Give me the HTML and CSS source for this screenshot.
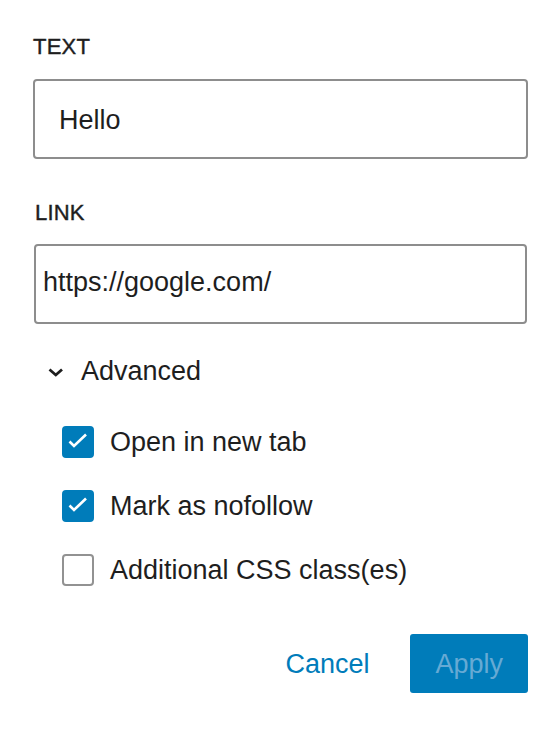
FILE: index.html
```html
<!DOCTYPE html>
<html>
<head>
<meta charset="utf-8">
<link rel="stylesheet" href="styles.css">
</head>
<body>
<div class="panel">
  <div class="field-label label-text">TEXT</div>
  <div class="input input-text">Hello</div>
  <div class="field-label label-link">LINK</div>
  <div class="input input-link">https://google.com/</div>
  <div class="advanced">
    <svg class="chevron" width="16" height="9" viewBox="0 0 16 9"><polyline points="1.5,1.5 7.8,7 14,1.5" fill="none" stroke="#1e1e1e" stroke-width="2.8"/></svg>
    <span>Advanced</span>
  </div>
  <div class="options">
    <div class="option">
      <span class="box checked"><svg width="32" height="32" viewBox="0 0 32 32"><polyline points="7.5,15.5 12,20 24,8.5" fill="none" stroke="#fff" stroke-width="2.6"/></svg></span>
      <span>Open in new tab</span>
    </div>
    <div class="option">
      <span class="box checked"><svg width="32" height="32" viewBox="0 0 32 32"><polyline points="7.5,15.5 12,20 24,8.5" fill="none" stroke="#fff" stroke-width="2.6"/></svg></span>
      <span>Mark as nofollow</span>
    </div>
    <div class="option">
      <span class="box"></span>
      <span>Additional CSS class(es)</span>
    </div>
  </div>
  <div class="actions">
    <button class="btn btn-cancel">Cancel</button>
    <button class="btn btn-apply">Apply</button>
  </div>
</div>
</body>
</html>
```
FILE: styles.css
```css
html, body {
  margin: 0;
  padding: 0;
  background: #ffffff;
}
body {
  font-family: "Liberation Sans", Arial, sans-serif;
  color: #1e1e1e;
}
.panel {
  width: 495px;
  margin-left: 33px;
  padding-top: 33px;
  display: flex;
  flex-direction: column;
}
.field-label {
  font-size: 22px;
  line-height: 28px;
  letter-spacing: 0.2px;
  -webkit-text-stroke: 0.4px #1e1e1e;
}
.label-text {
  margin-bottom: 18px;
}
.label-link {
  margin-top: 40px;
  margin-bottom: 17px;
  margin-left: 2px;
}
.input {
  box-sizing: border-box;
  height: 80px;
  border: 2px solid #8d8d8d;
  border-radius: 4px;
  font-size: 27px;
  display: flex;
  align-items: center;
}
.input-text {
  padding-left: 24px;
  padding-top: 2px;
}
.input-link {
  margin-left: 1px;
  width: 493px;
  height: 80px;
  padding-left: 7px;
  padding-bottom: 4px;
}
.advanced {
  margin-top: 31px;
  height: 32px;
  display: flex;
  align-items: center;
  font-size: 27px;
  line-height: 32px;
}
.chevron {
  margin-left: 15px;
  margin-right: 17px;
  margin-top: 2px;
}
.options {
  margin-top: 39px;
  margin-left: 29px;
  display: flex;
  flex-direction: column;
  gap: 32px;
}
.option {
  display: flex;
  align-items: center;
  gap: 16px;
  height: 32px;
  font-size: 27px;
  line-height: 32px;
}
.box {
  box-sizing: border-box;
  width: 32px;
  height: 32px;
  border: 2px solid #929292;
  border-radius: 4px;
  flex: none;
  position: relative;
}
.box.checked {
  background: #007cba;
  border-color: #007cba;
}
.box svg {
  position: absolute;
  left: -2px;
  top: -2px;
}
.actions {
  margin-top: 48px;
  display: flex;
  justify-content: flex-end;
  gap: 16px;
}
.btn {
  font-family: "Liberation Sans", Arial, sans-serif;
  font-size: 27px;
  height: 59px;
  padding: 2px 25px 0;
  border: none;
  border-radius: 3px;
  background: transparent;
}
.btn-cancel {
  color: #007cba;
}
.btn-apply {
  background: #007cba;
  color: #66aad4;
}
```
